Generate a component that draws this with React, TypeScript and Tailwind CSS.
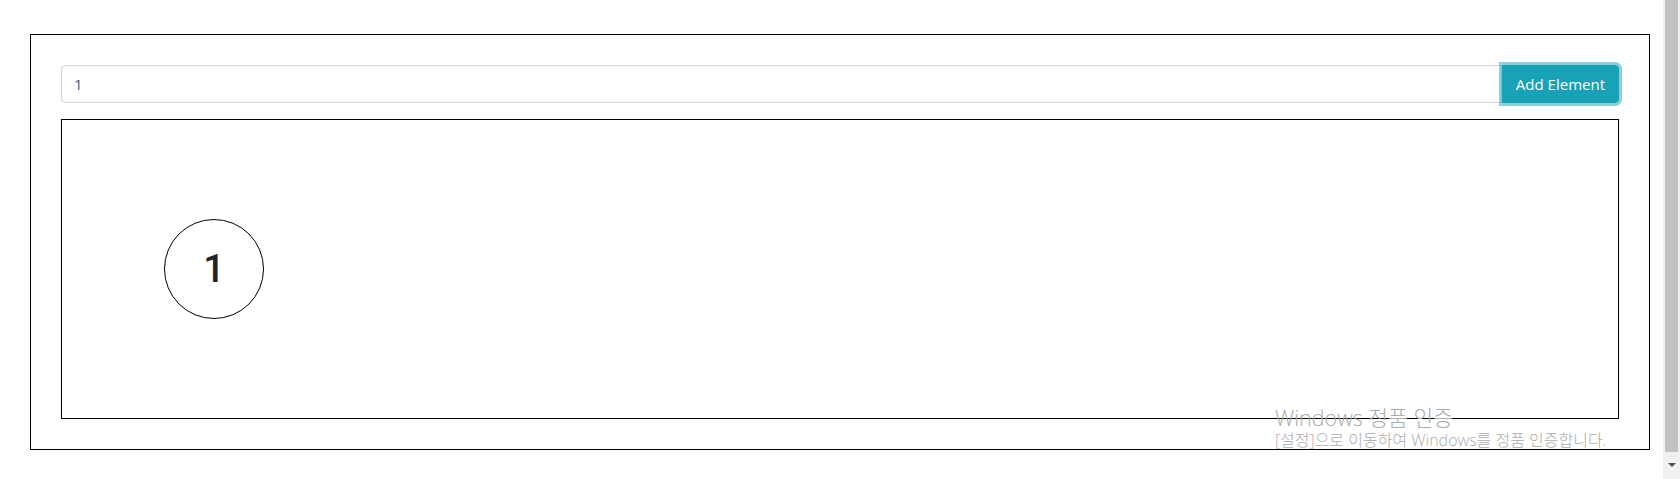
import React from 'react';

const uiFont = { fontFamily: '"Open Sans", "Noto Sans", "Liberation Sans", sans-serif' };

const Scrollbar: React.FC = () => (
  <div className="flex w-[17px] shrink-0 flex-col items-center bg-[#f0f0f0]">
    <div className="h-[452px] w-[13px] bg-[#c1c1c1]" />
    <div className="h-[11px]" />
    <div className="h-0 w-0 border-x-[4px] border-t-[4px] border-x-transparent border-t-[#505050]" />
  </div>
);

const Watermark: React.FC = () => (
  <div
    className="pointer-events-none absolute left-[1275px] top-[405px] text-[#ababab]"
    style={{ fontFamily: '"Open Sans", "Noto Sans CJK KR", sans-serif' }}
  >
    <div className="text-[21.5px] leading-[26px] font-light">Windows 정품 인증</div>
    <div className="text-[16px] leading-[19px] font-light">[설정]으로 이동하여 Windows를 정품 인증합니다.</div>
  </div>
);

export default function App() {
  const nodes = [{ id: 1, label: '1', x: 102, y: 99 }];

  return (
    <div className="flex h-[479px] overflow-hidden bg-white" style={uiFont}>
      <div className="relative min-w-0 flex-1">
        <div className="ml-[30px] mt-[34px] w-[1620px] border border-black p-[30px]">
          <div className="flex h-[38px]">
            <input
              className="min-w-0 flex-1 rounded-l-[4px] border border-[#ced4da] px-3 text-[15px] text-[#3b5f80] outline-none"
              defaultValue="1"
            />
            <button className="rounded-r-[4px] border border-[#17a2b8] bg-[#17a2b8] px-[13px] text-[15px] text-white shadow-[0_0_0_3px_rgba(23,162,184,0.5)]">
              Add Element
            </button>
          </div>
          <div className="relative mt-[16px] h-[300px] border border-black">
            {nodes.map((n) => (
              <div
                key={n.id}
                className="absolute flex h-[100px] w-[100px] items-center justify-center rounded-full border border-black text-[38px] font-medium text-[#212529]"
                style={{ left: n.x, top: n.y, fontFamily: 'Roboto, "Liberation Sans", sans-serif' }}
              >
                {n.label}
              </div>
            ))}
          </div>
        </div>
        <Watermark />
      </div>
      <Scrollbar />
    </div>
  );
}
